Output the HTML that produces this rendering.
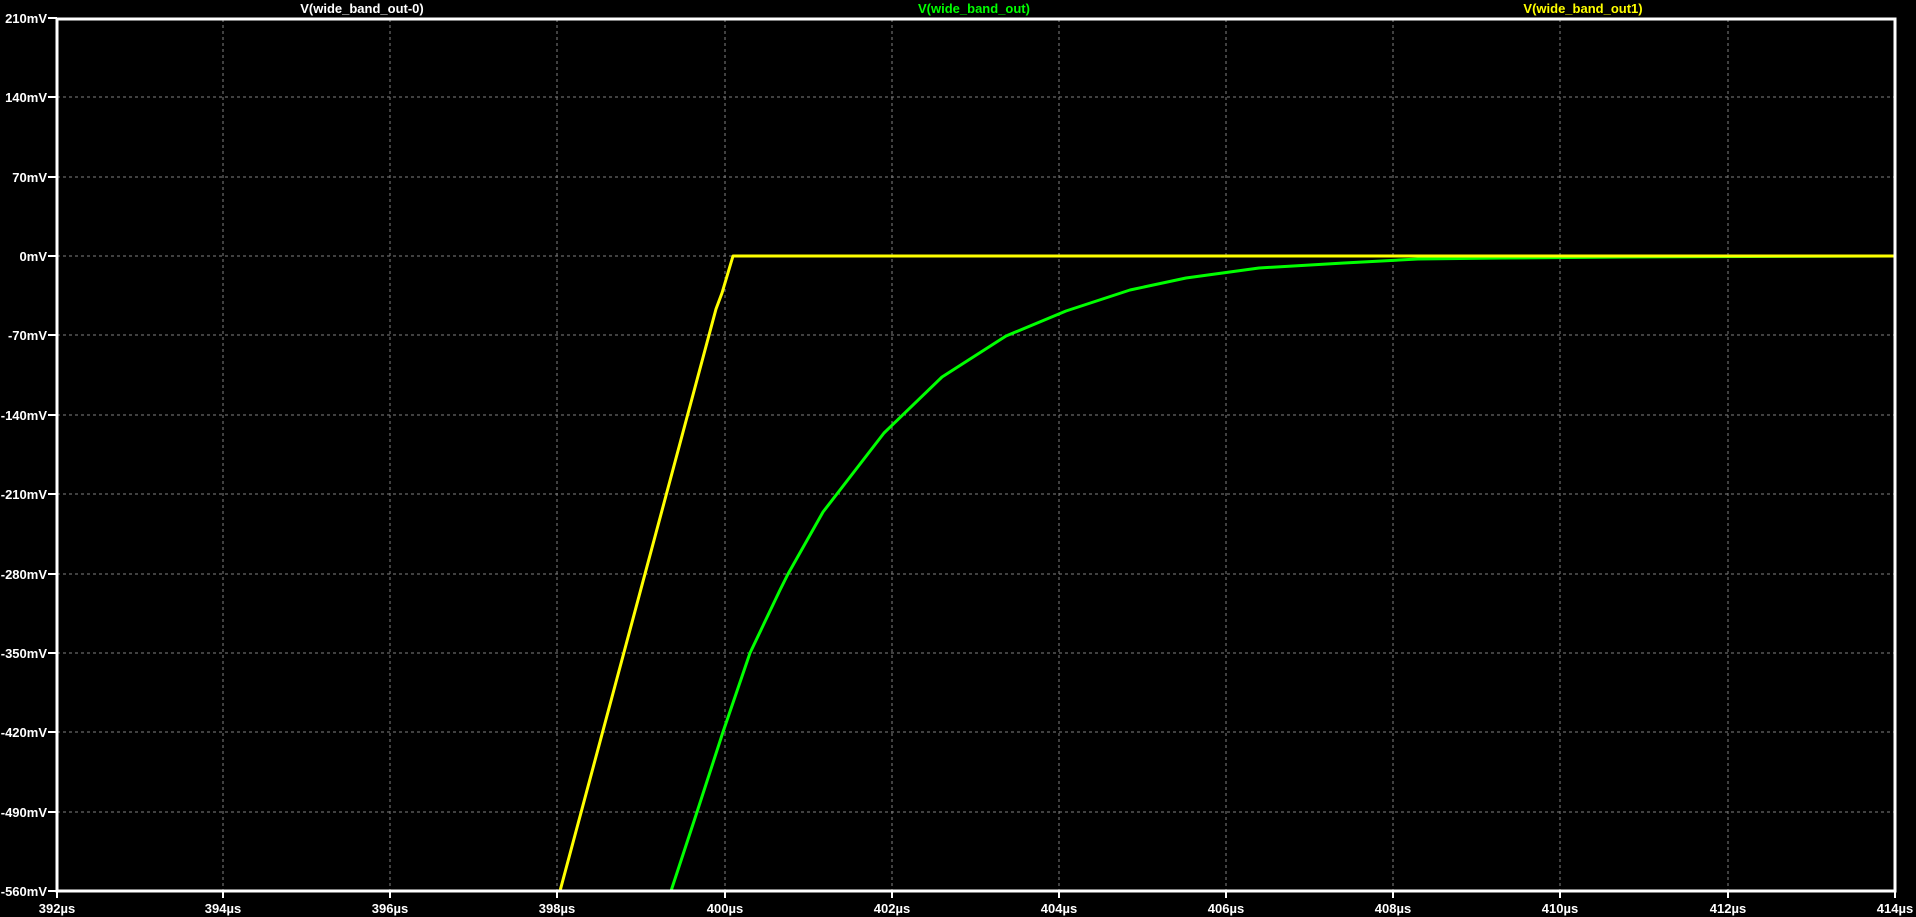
<!DOCTYPE html>
<html><head><meta charset="utf-8"><style>
html,body{margin:0;padding:0;background:#000;width:1916px;height:917px;overflow:hidden}
svg text{font-family:"Liberation Sans",sans-serif;font-weight:bold;font-size:13px}
</style></head><body>
<svg width="1916" height="917" xmlns="http://www.w3.org/2000/svg">
<rect width="1916" height="917" fill="#000"/>
<g stroke="#808080" stroke-width="1" stroke-dasharray="3,3">
<line x1="223" y1="19" x2="223" y2="890"/>
<line x1="390" y1="19" x2="390" y2="890"/>
<line x1="557" y1="19" x2="557" y2="890"/>
<line x1="725" y1="19" x2="725" y2="890"/>
<line x1="892" y1="19" x2="892" y2="890"/>
<line x1="1059" y1="19" x2="1059" y2="890"/>
<line x1="1226" y1="19" x2="1226" y2="890"/>
<line x1="1393" y1="19" x2="1393" y2="890"/>
<line x1="1560" y1="19" x2="1560" y2="890"/>
<line x1="1728" y1="19" x2="1728" y2="890"/>
<line x1="57" y1="97" x2="1894" y2="97"/>
<line x1="57" y1="177" x2="1894" y2="177"/>
<line x1="57" y1="256" x2="1894" y2="256"/>
<line x1="57" y1="335" x2="1894" y2="335"/>
<line x1="57" y1="415" x2="1894" y2="415"/>
<line x1="57" y1="494" x2="1894" y2="494"/>
<line x1="57" y1="574" x2="1894" y2="574"/>
<line x1="57" y1="653" x2="1894" y2="653"/>
<line x1="57" y1="732" x2="1894" y2="732"/>
<line x1="57" y1="812" x2="1894" y2="812"/>
</g>
<polyline fill="none" stroke="#00ff00" stroke-width="3" stroke-linejoin="round" points="671,891 697,812 723,732 750,653 780,590 788,574 823,512 884,433 942,377 1006,336 1066,311 1130,290 1186,278 1259,268 1344,263 1418,259 1503,258 1626,257 1895,256"/>
<polyline fill="none" stroke="#ffff00" stroke-width="3" stroke-linejoin="round" points="560,891 716,309 722,293 733,256 1895,256"/>
<g stroke="#fff" stroke-width="3" fill="none">
<rect x="57" y="19" width="1838" height="872"/>
</g>
<g stroke="#fff" stroke-width="2">
<line x1="48" y1="18" x2="57" y2="18"/><line x1="48" y1="97" x2="57" y2="97"/><line x1="48" y1="177" x2="57" y2="177"/><line x1="48" y1="256" x2="57" y2="256"/><line x1="48" y1="335" x2="57" y2="335"/><line x1="48" y1="415" x2="57" y2="415"/><line x1="48" y1="494" x2="57" y2="494"/><line x1="48" y1="574" x2="57" y2="574"/><line x1="48" y1="653" x2="57" y2="653"/><line x1="48" y1="732" x2="57" y2="732"/><line x1="48" y1="812" x2="57" y2="812"/><line x1="48" y1="891" x2="57" y2="891"/>
<line x1="57" y1="891" x2="57" y2="898"/><line x1="223" y1="891" x2="223" y2="898"/><line x1="390" y1="891" x2="390" y2="898"/><line x1="557" y1="891" x2="557" y2="898"/><line x1="725" y1="891" x2="725" y2="898"/><line x1="892" y1="891" x2="892" y2="898"/><line x1="1059" y1="891" x2="1059" y2="898"/><line x1="1226" y1="891" x2="1226" y2="898"/><line x1="1393" y1="891" x2="1393" y2="898"/><line x1="1560" y1="891" x2="1560" y2="898"/><line x1="1728" y1="891" x2="1728" y2="898"/><line x1="1895" y1="891" x2="1895" y2="898"/>
</g>
<g fill="#fff" text-anchor="end">
<text x="47" y="23">210mV</text><text x="47" y="102">140mV</text><text x="47" y="182">70mV</text><text x="47" y="261">0mV</text><text x="47" y="340">-70mV</text><text x="47" y="420">-140mV</text><text x="47" y="499">-210mV</text><text x="47" y="579">-280mV</text><text x="47" y="658">-350mV</text><text x="47" y="737">-420mV</text><text x="47" y="817">-490mV</text><text x="47" y="896">-560mV</text>
</g>
<g fill="#fff" text-anchor="middle">
<text x="57" y="913">392µs</text><text x="223" y="913">394µs</text><text x="390" y="913">396µs</text><text x="557" y="913">398µs</text><text x="725" y="913">400µs</text><text x="892" y="913">402µs</text><text x="1059" y="913">404µs</text><text x="1226" y="913">406µs</text><text x="1393" y="913">408µs</text><text x="1560" y="913">410µs</text><text x="1728" y="913">412µs</text><text x="1895" y="913">414µs</text>
</g>
<text x="362" y="13" fill="#fff" text-anchor="middle">V(wide_band_out-0)</text>
<text x="974" y="13" fill="#00ff00" text-anchor="middle">V(wide_band_out)</text>
<text x="1583" y="13" fill="#ffff00" text-anchor="middle">V(wide_band_out1)</text>
</svg>
</body></html>
